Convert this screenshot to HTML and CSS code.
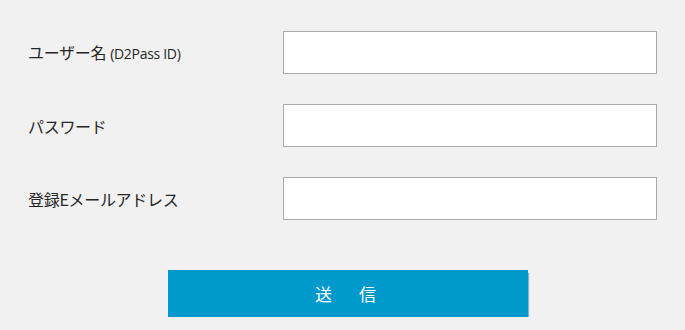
FILE: index.html
```html
<!DOCTYPE html>
<html lang="ja">
<head>
<meta charset="utf-8">
<link rel="stylesheet" href="styles.css">
</head>
<body>
<form class="form">
  <div class="row">
    <label class="label" for="u">ユーザー名<span class="sub">(D2Pass ID)</span></label>
    <input class="field" id="u" type="text">
  </div>
  <div class="row">
    <label class="label" for="p">パスワード</label>
    <input class="field" id="p" type="password">
  </div>
  <div class="row row-last">
    <label class="label" for="e">登録Eメールアドレス</label>
    <input class="field" id="e" type="text">
  </div>
  <div class="actions">
    <button class="submit" type="button">送　信</button>
  </div>
</form>
</body>
</html>
```
FILE: styles.css
```css
html, body {
  margin: 0;
  padding: 0;
  background: #f1f1f1;
}
body {
  font-family: "Noto Sans CJK JP", "Noto Sans", sans-serif;
  color: #262626;
}
.form {
  padding: 31px 28px 0 28px;
}
.row {
  display: flex;
  align-items: center;
  height: 43px;
  margin-bottom: 30px;
}
.row-last {
  margin-bottom: 50px;
}
.label {
  width: 255px;
  font-size: 16px;
  line-height: 20px;
  letter-spacing: -0.3px;
}
.sub {
  margin-left: 4px;
  font-family: "Open Sans", "Noto Sans", sans-serif;
  font-size: 14px;
  letter-spacing: -0.3px;
}
.field {
  box-sizing: border-box;
  width: 374px;
  height: 43px;
  margin: 0;
  border: 1px solid #aaaaaa;
  background: #fff;
  outline: none;
  padding: 0 8px;
}
.actions {
  display: flex;
  padding-left: 140px;
}
.submit {
  width: 360px;
  height: 47px;
  border: 0;
  margin: 0;
  background: #0099cc;
  color: #fff;
  font-family: "Noto Sans CJK JP", sans-serif;
  font-size: 17px;
  letter-spacing: 5px;
  box-shadow: 2px 2px 1px -1px rgba(40, 120, 170, 0.5);
  cursor: pointer;
}
```
